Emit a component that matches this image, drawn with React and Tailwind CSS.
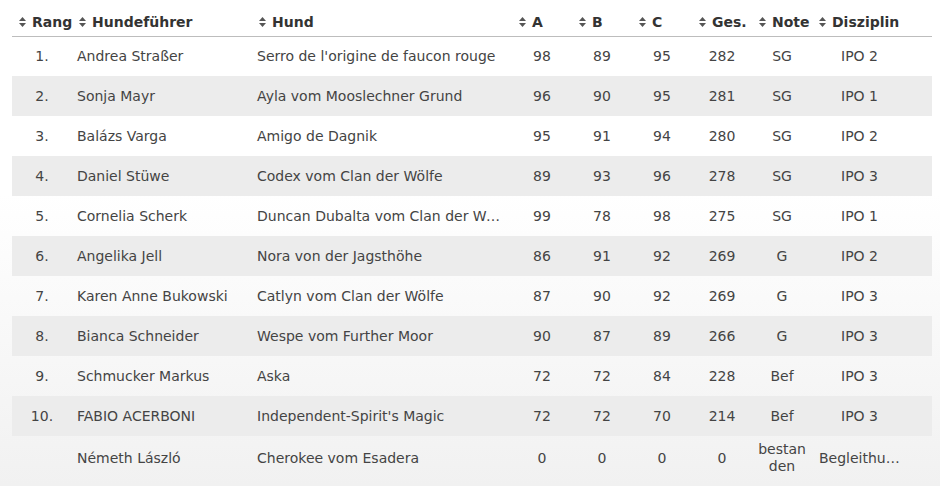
import React from "react";

const rows = [
  { rank: "1.", handler: "Andrea Straßer", dog: "Serro de l'origine de faucon rouge", a: 98, b: 89, c: 95, total: 282, note: "SG", disc: "IPO 2" },
  { rank: "2.", handler: "Sonja Mayr", dog: "Ayla vom Mooslechner Grund", a: 96, b: 90, c: 95, total: 281, note: "SG", disc: "IPO 1" },
  { rank: "3.", handler: "Balázs Varga", dog: "Amigo de Dagnik", a: 95, b: 91, c: 94, total: 280, note: "SG", disc: "IPO 2" },
  { rank: "4.", handler: "Daniel Stüwe", dog: "Codex vom Clan der Wölfe", a: 89, b: 93, c: 96, total: 278, note: "SG", disc: "IPO 3" },
  { rank: "5.", handler: "Cornelia Scherk", dog: "Duncan Dubalta vom Clan der Wölfe", a: 99, b: 78, c: 98, total: 275, note: "SG", disc: "IPO 1" },
  { rank: "6.", handler: "Angelika Jell", dog: "Nora von der Jagsthöhe", a: 86, b: 91, c: 92, total: 269, note: "G", disc: "IPO 2" },
  { rank: "7.", handler: "Karen Anne Bukowski", dog: "Catlyn vom Clan der Wölfe", a: 87, b: 90, c: 92, total: 269, note: "G", disc: "IPO 3" },
  { rank: "8.", handler: "Bianca Schneider", dog: "Wespe vom Further Moor", a: 90, b: 87, c: 89, total: 266, note: "G", disc: "IPO 3" },
  { rank: "9.", handler: "Schmucker Markus", dog: "Aska", a: 72, b: 72, c: 84, total: 228, note: "Bef", disc: "IPO 3" },
  { rank: "10.", handler: "FABIO ACERBONI", dog: "Independent-Spirit's Magic", a: 72, b: 72, c: 70, total: 214, note: "Bef", disc: "IPO 3" },
  { rank: "", handler: "Németh László", dog: "Cherokee vom Esadera", a: 0, b: 0, c: 0, total: 0, note: "bestanden", disc: "Begleithundeprüfung" },
];

const headers = ["Rang", "Hundeführer", "Hund", "A", "B", "C", "Ges.", "Note", "Disziplin"];

// little up/down arrows of the sortable headers
const SortIcon = () => (
  <svg width="7" height="10" viewBox="0 0 7 10" className="inline-block mr-[6px] mb-[1px] align-middle">
    <path d="M0 4 L3.5 0 L7 4 Z" fill="#555" />
    <path d="M0 6 L3.5 10 L7 6 Z" fill="#555" />
  </svg>
);

const App = () => {
  return (
    <div
      className="w-[940px] h-[486px] overflow-hidden pl-[12px] bg-gradient-to-b from-white from-40% to-[#f1f1f1] text-[#444] text-[14px] leading-[17px]"
      style={{ fontFamily: '"DejaVu Sans", Verdana, sans-serif' }}
    >
      <table className="w-[920px] table-fixed border-collapse">
        <colgroup>
          <col className="w-[60px]" />
          <col className="w-[180px]" />
          <col className="w-[260px]" />
          <col className="w-[60px]" />
          <col className="w-[60px]" />
          <col className="w-[60px]" />
          <col className="w-[60px]" />
          <col className="w-[60px]" />
          <col className="w-[93px]" />
          <col className="w-[27px]" />
        </colgroup>
        <thead>
          <tr className="border-b border-[#bdbdbd]">
            {headers.map((h) => (
              <th
                key={h}
                className="h-[36px] align-bottom pb-[5px] pl-[7px] pr-0 text-left font-bold text-[#333] whitespace-nowrap"
              >
                <SortIcon />
                {h}
              </th>
            ))}
            <th />
          </tr>
        </thead>
        <tbody>
          {rows.map((r, i) => (
            <tr key={i} className={i % 2 === 1 ? "bg-[#ececec]" : ""}>
              <td className="h-[40px] py-[5px] px-[5px] text-center">{r.rank}</td>
              <td className="py-[5px] px-[5px] truncate">{r.handler}</td>
              <td className="py-[5px] px-[5px] truncate">{r.dog}</td>
              <td className="py-[5px] px-[5px] text-center">{r.a}</td>
              <td className="py-[5px] px-[5px] text-center">{r.b}</td>
              <td className="py-[5px] px-[5px] text-center">{r.c}</td>
              <td className="py-[5px] px-[5px] text-center">{r.total}</td>
              <td className="py-[5px] px-[5px] text-center break-all">{r.note}</td>
              <td className="py-[5px] pl-[7px] pr-[5px] text-center truncate">{r.disc}</td>
              <td />
            </tr>
          ))}
        </tbody>
      </table>
    </div>
  );
};

export default App;
